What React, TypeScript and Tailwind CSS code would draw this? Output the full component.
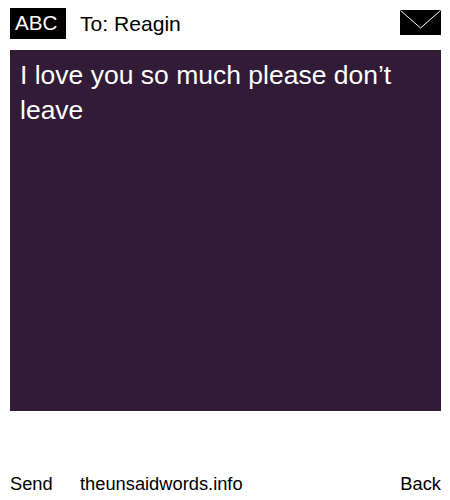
import React from 'react';

const App: React.FC = () => {
  return (
    <div className="w-[450px] h-[500px] bg-white text-black pl-[10px] pr-[9px] flex flex-col font-['Liberation_Sans',Arial,sans-serif]">
      {/* Header */}
      <div className="flex items-start h-[31px] mt-2">
        <div className="bg-black text-white w-14 h-[31px] pl-[5px] flex items-center text-[20.6px] leading-none">ABC</div>
        <div className="ml-[14px] h-[31px] flex items-center text-[21.1px] leading-none">To: Reagin</div>
        <svg className="ml-auto mt-[2px]" width="41" height="25" viewBox="0 0 41 25">
          <rect width="41" height="25" fill="#000" />
          <path d="M0.5 0.5 L20.5 18 L40.5 0.5" fill="none" stroke="#fff" strokeWidth="1" />
        </svg>
      </div>

      {/* Message */}
      <div className="mt-[11px] h-[361px] bg-[#321b36] text-white text-[26.5px] leading-[35px] px-[10px] py-2">
        I love you so much please don’t leave
      </div>

      {/* Footer */}
      <div className="mt-auto mb-[6px] flex items-center text-[18.3px] leading-[21px]">
        <span className="w-[70px]">Send</span>
        <span>theunsaidwords.info</span>
        <span className="ml-auto">Back</span>
      </div>
    </div>
  );
};

export default App;
